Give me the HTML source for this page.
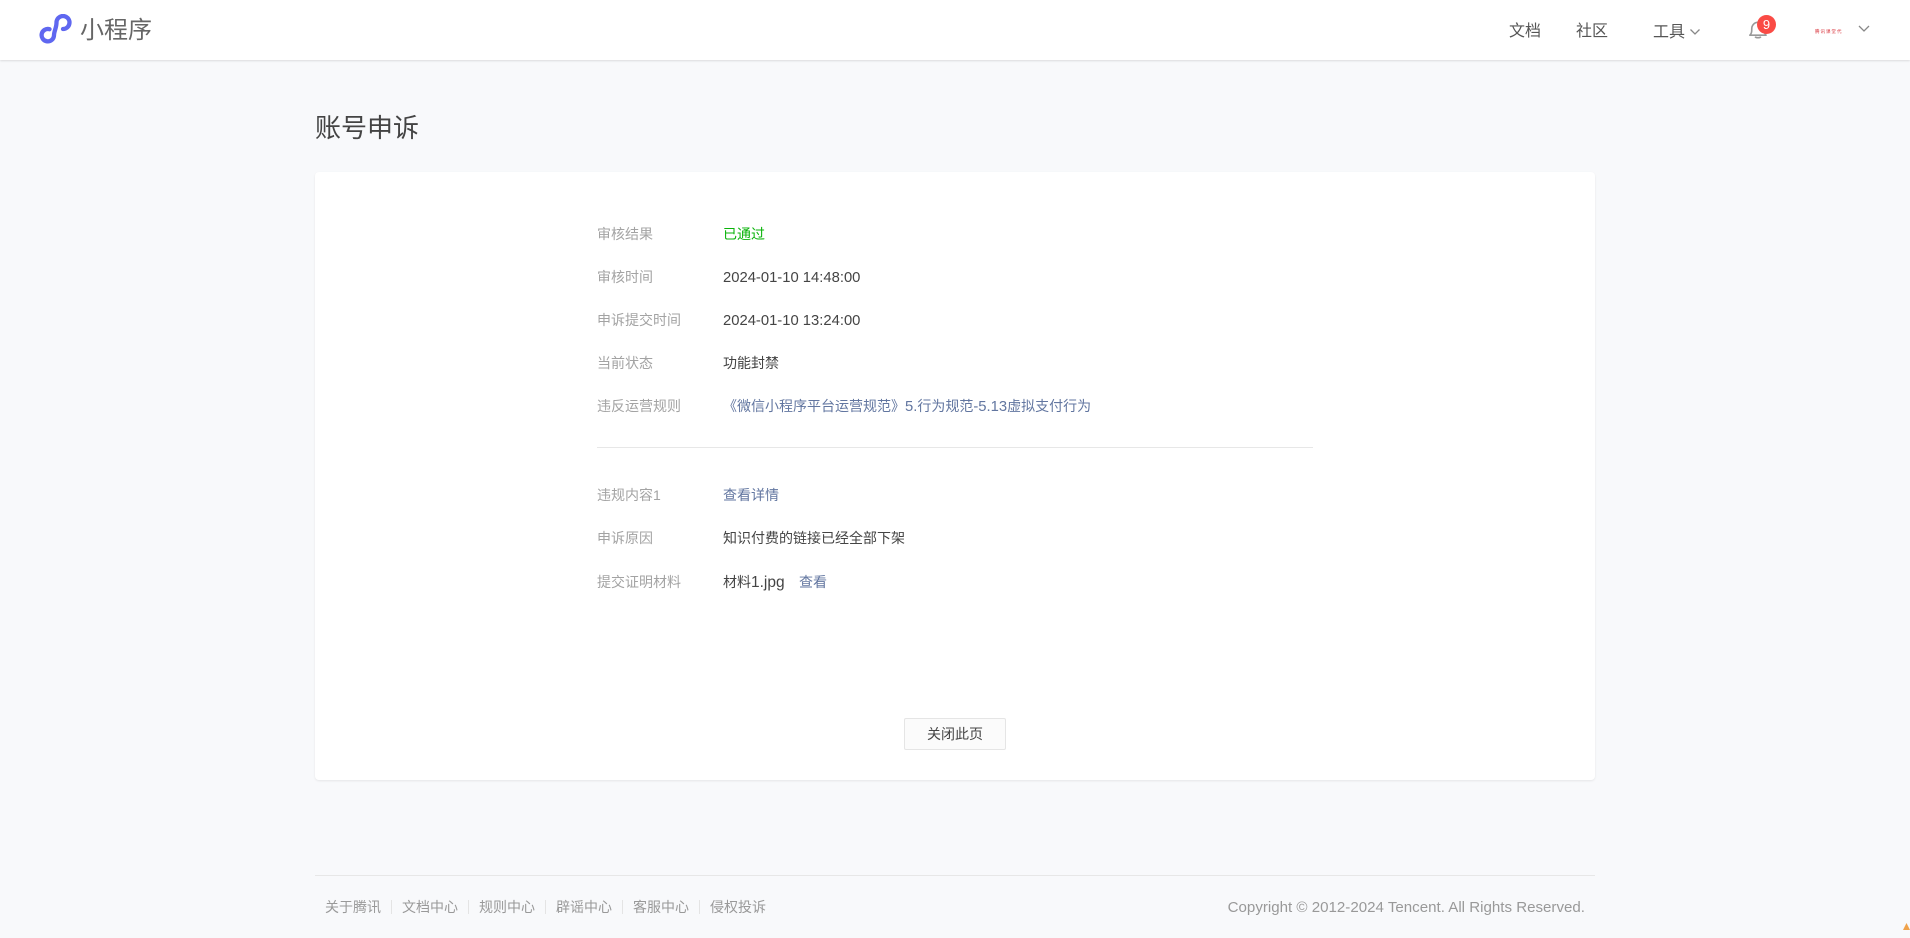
<!DOCTYPE html>
<html lang="zh-CN">
<head>
<meta charset="utf-8">
<title>账号申诉</title>
<style>
*{box-sizing:border-box;margin:0;padding:0}
html,body{width:1910px;height:938px;overflow:hidden}
body{position:relative;background:#f8f9fb;font-family:"Liberation Sans","Noto Sans CJK SC",sans-serif;color:#444;font-size:14px}
.abs{position:absolute;white-space:nowrap;line-height:20px}
#nav{position:absolute;left:0;top:0;width:1910px;height:60px;background:#fff;box-shadow:0 1px 2px rgba(0,0,0,.12)}
#card{position:absolute;left:315px;top:172px;width:1280px;height:608px;background:#fff;border-radius:4px;box-shadow:0 1px 2px rgba(0,0,0,.08)}
.l{color:#a3a3a3;left:597px}
.v{left:723px;color:#444}
.a{color:#6276a0}
.d{font-size:14.800px}
.f{color:#999;top:897px}
.s{position:absolute;top:900px;width:1px;height:14px;background:#e4e4e4}
</style>
</head>
<body>
<div id="nav"></div>
<svg class="abs" style="left:38px;top:14px" width="36" height="32" viewBox="38 13 36 32" fill="none">
<path d="M49.500 28.200A6.200 6.200 0 1 0 54 34.400C54 30 56.500 27 56.500 21.500A6.500 6.500 0 1 1 63 28" stroke="#5f67f0" stroke-width="4.300" stroke-linecap="round"/>
</svg>
<div class="abs" style="left:80px;top:16px;font-size:24px;line-height:30px;color:#666">小程序</div>
<div class="abs" style="left:1509px;top:22px;font-size:16px;color:#555">文档</div>
<div class="abs" style="left:1576px;top:22px;font-size:16px;color:#555">社区</div>
<div class="abs" style="left:1653px;top:23px;font-size:16px;color:#555">工具</div>
<svg class="abs" style="left:1689px;top:28px" width="12" height="8" viewBox="0 0 12 8" fill="none"><path d="M1.500 1.500L6 6l4.500-4.500" stroke="#888" stroke-width="1.300"/></svg>
<svg class="abs" style="left:1747px;top:19px" width="21" height="21" viewBox="0 0 22 22" fill="none"><path d="M3 17c2-2 2-4 2-7a6.500 6.500 0 0 1 13 0c0 3 0 5 2 7z M8.500 18.500c1 1.500 5 1.500 6 0" stroke="#999" stroke-width="1.700" stroke-linejoin="round"/></svg>
<div class="abs" style="left:1757px;top:15px;width:19px;height:19px;border-radius:50%;background:#fa4b45;color:#fff;font-size:13px;line-height:19px;text-align:center">9</div>
<div class="abs" style="left:1815px;top:27px;font-size:4.500px;line-height:10px;color:#d8323a;letter-spacing:1px">腾讯课堂代</div>
<svg class="abs" style="left:1857px;top:24px" width="14" height="9" viewBox="0 0 14 9" fill="none"><path d="M2 2l5 5 5-5" stroke="#888" stroke-width="1.300"/></svg>

<div class="abs" style="left:315px;top:109px;font-size:26px;line-height:38px;color:#444">账号申诉</div>
<div id="card"></div>

<div class="abs l" style="top:224px">审核结果</div>
<div class="abs v" style="top:224px;color:#09b309">已通过</div>
<div class="abs l" style="top:267px">审核时间</div>
<div class="abs v d" style="top:268px">2024-01-10 14:48:00</div>
<div class="abs l" style="top:310px">申诉提交时间</div>
<div class="abs v d" style="top:311px">2024-01-10 13:24:00</div>
<div class="abs l" style="top:353px">当前状态</div>
<div class="abs v" style="top:353px">功能封禁</div>
<div class="abs l" style="top:396px">违反运营规则</div>
<div class="abs v a" style="top:396px">《微信小程序平台运营规范》<span class="d">5.</span>行为规范<span class="d">-5.13</span>虚拟支付行为</div>
<div class="abs" style="left:597px;top:447px;width:716px;height:1px;background:#e7e7e7"></div>
<div class="abs l" style="top:485px">违规内容1</div>
<div class="abs v a" style="top:485px">查看详情</div>
<div class="abs l" style="top:528px">申诉原因</div>
<div class="abs v" style="top:528px">知识付费的链接已经全部下架</div>
<div class="abs l" style="top:572px">提交证明材料</div>
<div class="abs v" style="top:572px">材料<span style="font-size:15.500px">1.jpg</span></div>
<div class="abs v a" style="left:799px;top:572px">查看</div>

<div class="abs" style="left:904px;top:718px;width:102px;height:32px;background:#fbfbfb;border:1px solid #e5e5e5;border-radius:2px;text-align:center;line-height:30px;color:#444">关闭此页</div>

<div class="abs" style="left:315px;top:875px;width:1280px;height:1px;background:#e7e7e7"></div>
<div class="abs f" style="left:325px">关于腾讯</div><div class="s" style="left:391px"></div>
<div class="abs f" style="left:402px">文档中心</div><div class="s" style="left:468px"></div>
<div class="abs f" style="left:479px">规则中心</div><div class="s" style="left:545px"></div>
<div class="abs f" style="left:556px">辟谣中心</div><div class="s" style="left:622px"></div>
<div class="abs f" style="left:633px">客服中心</div><div class="s" style="left:699px"></div>
<div class="abs f" style="left:710px">侵权投诉</div>
<div class="abs f" style="right:325px;top:898px;font-size:15.100px">Copyright © 2012-2024 Tencent. All Rights Reserved.</div>
<svg class="abs" style="left:1903px;top:923px" width="7" height="7" viewBox="0 0 7 7"><path d="M3.500 0L7 7H0z" fill="#f0a24a"/></svg>
</body>
</html>
